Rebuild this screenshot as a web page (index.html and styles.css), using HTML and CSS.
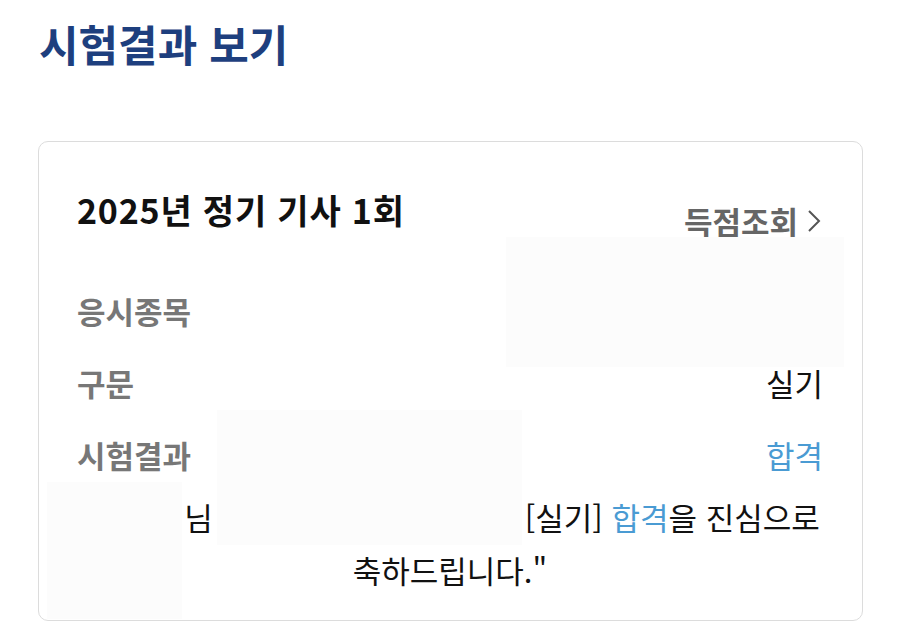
FILE: index.html
```html
<!DOCTYPE html>
<html lang="ko">
<head>
<meta charset="utf-8">
<link rel="stylesheet" href="styles.css">
</head>
<body>
<div class="page">
  <h1 class="title">시험결과 보기</h1>
  <div class="card">
    <div class="card-head">
      <div class="exam-name">2025년 정기 기사 1회</div>
      <a class="score-link">득점조회<svg class="chev" width="14" height="24" viewBox="0 0 14 24"><path d="M2 2 L12 12 L2 22" fill="none" stroke="#555" stroke-width="2"/></svg></a>
    </div>
    <div class="row"><span class="label">응시종목</span><span class="value"></span></div>
    <div class="row"><span class="label">구문</span><span class="value">실기</span></div>
    <div class="row"><span class="label">시험결과</span><span class="value pass">합격</span></div>
    <p class="message"><span class="gap g1"></span>님<span class="gap g2"></span>[실기] <span class="pass">합격</span>을 진심으로<br>축하드립니다."</p>
    <div class="mask m1"></div>
    <div class="mask m2"></div>
    <div class="mask m3"></div>
  </div>
</div>
</body>
</html>
```
FILE: styles.css
```css
html, body {
  margin: 0;
  padding: 0;
  background: #ffffff;
}
body {
  font-family: "Noto Sans CJK KR", "Noto Sans", sans-serif;
  color: #111;
}
.page {
  padding: 13px 38px 0 38px;
  width: 825px;
}
.title {
  margin: 0 0 0 1px;
  font-size: 43px;
  font-weight: 700;
  color: #1e3f7e;
  line-height: 60px;
  letter-spacing: 0;
}
.card {
  position: relative;
  margin-top: 68px;
  border: 1.5px solid #dcdcdc;
  border-radius: 10px;
  height: 480px;
  box-sizing: border-box;
  padding: 37px 39px 0 38px;
}
.card-head {
  display: flex;
  justify-content: space-between;
  align-items: flex-end;
  height: 58px;
}
.exam-name {
  font-size: 34px;
  font-weight: 700;
  color: #111;
  line-height: 54px;
  letter-spacing: 0.8px;
}
.score-link {
  display: flex;
  align-items: center;
  gap: 9px;
  font-size: 31px;
  font-weight: 700;
  color: #666;
  line-height: 40px;
  margin-bottom: -4px;
  margin-right: 2px;
}
.chev {
  display: block;
}
.card-head + .row {
  margin-top: 37px;
}
.row {
  display: flex;
  justify-content: space-between;
  align-items: center;
  height: 72px;
}
.label {
  font-size: 31px;
  font-weight: 700;
  color: #777;
}
.value {
  font-size: 31px;
  color: #111;
}
.pass {
  color: #4a9bd3;
}
.message {
  margin: 0;
  text-align: center;
  font-size: 31px;
  line-height: 53px;
  color: #111;
  white-space: nowrap;
}
.gap {
  display: inline-block;
}
.g1 { width: 104px; }
.g2 { width: 312px; }
.mask {
  position: absolute;
  background: #fcfcfc;
}
.m1 { left: 467px; top: 95px; width: 338px; height: 130px; }
.m2 { left: 178px; top: 268px; width: 305px; height: 135px; }
.m3 { left: 8px; top: 340px; width: 135px; height: 137px; }
```
